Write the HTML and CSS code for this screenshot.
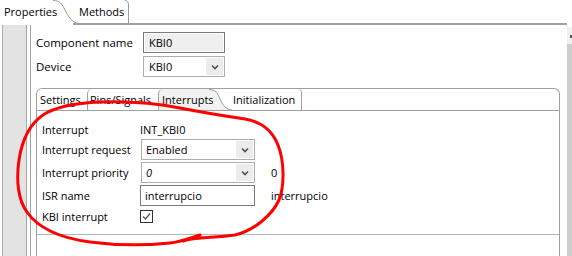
FILE: index.html
```html
<!DOCTYPE html>
<html>
<head>
<meta charset="utf-8">
<link rel="stylesheet" href="styles.css">
</head>
<body>
<div class="app">
  <div class="tabbar">
    <div class="tab tab-active">Properties</div>
    <svg class="tab-curve" width="26" height="25" viewBox="0 0 26 25"><path d="M0 0.5 C 7 0.5, 9 4, 12 10 S 19 23, 26 23.5" fill="none" stroke="#9a9a9a" stroke-width="1"/><rect x="20" y="23" width="6" height="2" fill="#a0a0a0"/></svg>
    <div class="tab tab-methods">Methods</div>
    <svg class="tab-end" width="4" height="25" viewBox="0 0 4 25"><path d="M0 0.5 Q 3.5 0.5 3.5 5 V 23" fill="none" stroke="#9a9a9a" stroke-width="1"/><rect x="0" y="23" width="4" height="2" fill="#a0a0a0"/></svg>
    <div class="tab-fill"></div>
  </div>
  <div class="main">
    <div class="side"></div>
    <div class="frame">
      <div class="form-top">
        <div class="lbl">Component name</div>
        <div class="field field-ro">KBI0</div>
        <div class="lbl">Device</div>
        <div class="field select">KBI0<span class="arrow"><svg width="8" height="6" viewBox="0 0 8 6"><path d="M1 1.5 L4 4.5 L7 1.5" fill="none" stroke="#505050" stroke-width="1.6"/></svg></span></div>
      </div>
      <div class="folder">
        <div class="ftabs">
          <div class="ftab ftab-settings">Settings</div>
          <div class="ftab ftab-pins">Pins/Signals</div>
          <div class="ftab ftab-int">Interrupts</div>
          <svg class="ftab-curve" width="19" height="21" viewBox="0 0 19 21"><path d="M0 0 C 4 1, 5 5, 7 10 S 13 21, 19 21 L 0 21 Z" fill="#f2f2f2"/><path d="M-4 0.5 C 3 0.5, 5 5, 7 10 S 13 21, 19 21" fill="none" stroke="#9a9a9a" stroke-width="1"/></svg>
          <div class="ftab ftab-init">Initialization</div>
        </div>
        <div class="fbody">
          <div class="grid">
            <div class="glbl">Interrupt</div>
            <div class="gval">INT_KBI0</div>
            <div class="gextra"></div>

            <div class="glbl">Interrupt request</div>
            <div class="gsel">Enabled<span class="arrow"><svg width="8" height="6" viewBox="0 0 8 6"><path d="M1 1.5 L4 4.5 L7 1.5" fill="none" stroke="#505050" stroke-width="1.6"/></svg></span></div>
            <div class="gextra"></div>

            <div class="glbl">Interrupt priority</div>
            <div class="gsel italic">0<span class="arrow"><svg width="8" height="6" viewBox="0 0 8 6"><path d="M1 1.5 L4 4.5 L7 1.5" fill="none" stroke="#505050" stroke-width="1.6"/></svg></span></div>
            <div class="gextra">0</div>

            <div class="glbl">ISR name</div>
            <div class="ginput">interrupcio</div>
            <div class="gextra">interrupcio</div>

            <div class="glbl">KBI interrupt</div>
            <div class="gcheck"><span class="check"><svg width="11" height="11" viewBox="0 0 11 11"><path d="M2 5.5 L4.5 8 L9 2.5" fill="none" stroke="#555" stroke-width="1.3"/></svg></span></div>
            <div class="gextra"></div>
          </div>
        </div>
        <div class="fbottom"></div>
      </div>
    </div>
    <div class="scroll"><div class="scroll-top"><span class="scroll-mark"></span></div><div class="scroll-thumb"></div></div>
  </div>
  <svg class="annot" width="572" height="256" viewBox="0 0 572 256">
    <path d="M 183 241 C 195 237, 215 238, 235 235 C 255 230, 272 215, 279 200 C 285 185, 284 160, 278 145 C 272 130, 262 122, 245 119 C 225 116, 200 112, 180 108 C 160 104, 130 101, 100 102 C 75 103, 55 107, 43 115 C 30 124, 22 140, 19 160 C 16 180, 18 200, 27 212 C 38 228, 60 238, 90 242 C 120 246, 150 245, 170 243 C 180 242, 190 238, 200 235" fill="none" stroke="#ff0000" stroke-width="3" stroke-linecap="round" stroke-linejoin="round"/>
  </svg>
</div>
</body>
</html>
```
FILE: styles.css
```css
* { box-sizing: border-box; }
html, body { margin: 0; padding: 0; background: #fff; }
body {
  font-family: "Open Sans", "Noto Sans", sans-serif;
  font-size: 11px;
  color: #000;
  width: 572px;
  height: 256px;
  overflow: hidden;
}
.app { position: relative; width: 572px; height: 256px; overflow: hidden; }

.tabbar { display: flex; height: 25px; }
.tab { height: 25px; line-height: 24px; white-space: nowrap; }
.tab-active { width: 53px; padding-left: 4px; border-bottom: 2px solid transparent; }
.tab-curve, .tab-end { display: block; flex: none; }
.tab-methods { width: 46px; border-bottom: 2px solid #a0a0a0; }
.tab-fill { width: 438px; border-bottom: 2px solid #a0a0a0; }

.main { display: flex; height: 231px; }
.side {
  width: 25px; margin-left: 2px;
  background: #e3e3e3;
  border-left: 1px solid #b0b0b0;
  border-right: 1px solid #a8a8a8;
}
.frame {
  flex: 1;
  margin-left: 3px;
  border-left: 1px solid #a0a0a0;
  padding: 7px 6px 0 5px;
  display: flex; flex-direction: column;
}
.form-top {
  display: grid;
  grid-template-columns: 107px 82px;
  grid-auto-rows: 21px;
  row-gap: 3px;
  align-items: center;
}
.lbl { line-height: 21px; font-size: 11.5px; }
.field {
  height: 21px; line-height: 19px; padding-left: 5px;
  position: relative;
}
.field-ro {
  background: #efefef;
  border: 1px solid #7a7a7a;
  box-shadow: inset 0 0 0 1px #fff;
}
.select { border: 1px solid #adadad; background: #fff; }
.arrow {
  position: absolute; right: 1px; top: 1px; bottom: 1px; width: 17px;
  background: #ececec;
  display: flex; align-items: center; justify-content: center;
}
.arrow svg { display: block; }

.folder {
  margin-top: 11px;
  flex: 1;
  border: 1px solid #a0a0a0;
  border-bottom: none;
  border-radius: 6px 6px 0 0;
  display: flex; flex-direction: column;
}
.ftabs { display: flex; height: 22px; border-bottom: 1px solid #a0a0a0; }
.ftab { height: 21px; line-height: 21px; white-space: nowrap; }
.ftab-settings { width: 50px; padding-left: 3px; }
.ftab-pins { width: 71px; padding-left: 2px; border-left: 1px solid #a0a0a0; border-top-left-radius: 5px; }
.ftab-int { width: 55px; padding-left: 3px; border-left: 1px solid #a0a0a0; border-top-left-radius: 5px; background: #f2f2f2; }
.ftab-curve { display: block; flex: none; overflow: visible; }
.ftab-init { width: 70px; padding-left: 1px; border-right: 1px solid #a0a0a0; border-top-right-radius: 4px; }

.fbody { height: 124px; border-bottom: 1px solid #b4b4b4; padding: 10px 0 0 5px; }
.grid {
  display: grid;
  grid-template-columns: 98px 115px auto;
  grid-template-rows: 16px 21px 21px 21px 17px;
  row-gap: 2px;
  align-items: center;
}
.glbl { white-space: nowrap; }
.gval { padding-left: 0; }
.gextra { padding-left: 16px; white-space: nowrap; }
.gsel {
  position: relative; height: 21px; line-height: 19px;
  border: 1px solid #adadad; padding-left: 4px; margin-left: 1px;
}
.italic { font-style: italic; }
.ginput {
  height: 21px; line-height: 19px; padding-left: 4px;
  border: 1px solid #7a7a7a;
}
.gcheck { display: flex; align-items: center; }
.check {
  width: 13px; height: 13px; border: 1px solid #333; background: #fff;
  display: flex; align-items: center; justify-content: center;
}
.check svg { display: block; }
.fbottom { flex: 1; }

.scroll { width: 5px; margin-left: 1px; padding-top: 2px; display: flex; flex-direction: column; }
.scroll-top { height: 17px; background: #f0f0f0; position: relative; }
.scroll-mark { position: absolute; right: 0; top: 8px; width: 2px; height: 3px; background: #555; }
.scroll-thumb { flex: 1; background: #cdcdcd; }

.annot { position: absolute; left: 0; top: 0; pointer-events: none; }
```
